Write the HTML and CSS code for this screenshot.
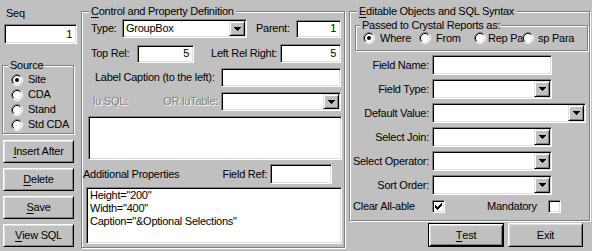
FILE: index.html
```html
<!DOCTYPE html>
<html>
<head>
<meta charset="utf-8">
<link rel="stylesheet" href="styles.css">
</head>
<body>
<svg class="defs" width="0" height="0">
  <symbol id="rb" viewBox="0 0 12 12">
    <circle cx="6" cy="6" r="4.5" fill="#fff"/>
    <path d="M2.11 9.89A5.5 5.5 0 0 1 9.89 2.11" stroke="#808080" fill="none"/>
    <path d="M9.89 2.11A5.5 5.5 0 0 1 2.11 9.89" stroke="#fff" fill="none"/>
    <path d="M2.82 9.18A4.5 4.5 0 0 1 9.18 2.82" stroke="#000" fill="none"/>
    <path d="M9.18 2.82A4.5 4.5 0 0 1 2.82 9.18" stroke="#dfdfdf" fill="none"/>
  </symbol>
  <symbol id="rb-on" viewBox="0 0 12 12">
    <use href="#rb"/>
    <circle cx="6" cy="6" r="2" fill="#000"/>
  </symbol>
  <symbol id="arrow" viewBox="0 0 7 4">
    <path d="M0 0h7v1H0zM1 1h5v1H1zM2 2h3v1H2zM3 3h1v1H3z" fill="#000"/>
  </symbol>
  <symbol id="check" viewBox="0 0 7 7">
    <path d="M0 2h1v3H0zM1 3h1v3H1zM2 4h1v3H2zM3 3h1v3H3zM4 2h1v3H4zM5 1h1v3H5zM6 0h1v3H6z" fill="#000"/>
  </symbol>
</svg>

<div class="app">
  <div class="left">
    <div class="seq-label">Seq</div>
    <div class="field num seq">1</div>
    <div class="group source">
      <div class="legend">Source</div>
      <div class="radio-row"><svg class="rb"><use href="#rb-on"/></svg><span>Site</span></div>
      <div class="radio-row"><svg class="rb"><use href="#rb"/></svg><span>CDA</span></div>
      <div class="radio-row"><svg class="rb"><use href="#rb"/></svg><span>Stand</span></div>
      <div class="radio-row"><svg class="rb"><use href="#rb"/></svg><span>Std CDA</span></div>
    </div>
    <div class="btns">
      <div class="btn"><u>I</u>nsert After</div>
      <div class="btn"><u>D</u>elete</div>
      <div class="btn"><u>S</u>ave</div>
      <div class="btn"><u>V</u>iew SQL</div>
    </div>
  </div>

  <div class="group mid">
    <div class="legend"><u>C</u>ontrol and Property Definition</div>
    <div class="row r1">
      <span class="lbl l-type">Type:</span>
      <div class="combo w-type"><span class="val">GroupBox</span><span class="drop"><svg class="arr"><use href="#arrow"/></svg></span></div>
      <span class="lbl l-parent">Parent:</span>
      <div class="field num w-parent">1</div>
    </div>
    <div class="row r2">
      <span class="lbl l-top">Top Rel:</span>
      <div class="field num w-top">5</div>
      <span class="lbl l-leftrel">Left Rel Right:</span>
      <div class="field num w-leftrel">5</div>
    </div>
    <div class="row r3">
      <span class="lbl l-caption">Label Caption (to the left):</span>
      <div class="field w-120"></div>
    </div>
    <div class="row r4">
      <span class="lbl dis l-lusql">lu SQL:</span>
      <span class="lbl dis l-lutable">OR luTable:</span>
      <div class="combo w-120"><span class="val"></span><span class="drop"><svg class="arr"><use href="#arrow"/></svg></span></div>
    </div>
    <div class="field area sql-area"></div>
    <div class="row r6">
      <span class="lbl l-addl">Additional Properties</span>
      <span class="lbl l-fieldref">Field Ref:</span>
      <div class="field w-fieldref"></div>
    </div>
    <div class="field area props-area">Height="200"<br>Width="400"<br>Caption="&amp;Optional Selections"</div>
  </div>

  <div class="right">
    <div class="group edit">
      <div class="legend"><u>E</u>ditable Objects and SQL Syntax</div>
      <div class="group passed">
        <div class="legend">Passed to Crystal Reports as:</div>
        <div class="opt o-where"><svg class="rb"><use href="#rb-on"/></svg><span>Where</span></div>
        <div class="opt o-from"><svg class="rb"><use href="#rb"/></svg><span>From</span></div>
        <div class="opt o-rep"><svg class="rb"><use href="#rb"/></svg><span>Rep Pa</span></div>
        <div class="opt o-sp"><svg class="rb"><use href="#rb"/></svg><span>sp Para</span></div>
      </div>
      <div class="frow"><span class="flbl">Field Name:</span><div class="field w-120"></div></div>
      <div class="frow"><span class="flbl">Field Type:</span><div class="combo w-120"><span class="val"></span><span class="drop"><svg class="arr"><use href="#arrow"/></svg></span></div></div>
      <div class="frow"><span class="flbl">Default Value:</span><div class="combo w-default"><span class="val"></span><span class="drop"><svg class="arr"><use href="#arrow"/></svg></span></div></div>
      <div class="frow"><span class="flbl">Select Join:</span><div class="combo w-120"><span class="val"></span><span class="drop"><svg class="arr"><use href="#arrow"/></svg></span></div></div>
      <div class="frow"><span class="flbl">Select Operator:</span><div class="combo w-120"><span class="val"></span><span class="drop"><svg class="arr"><use href="#arrow"/></svg></span></div></div>
      <div class="frow"><span class="flbl">Sort Order:</span><div class="combo w-120"><span class="val"></span><span class="drop"><svg class="arr"><use href="#arrow"/></svg></span></div></div>
      <div class="chkrow">
        <span class="c-clear">Clear All-able</span>
        <span class="chk"><svg class="tick"><use href="#check"/></svg></span>
        <span class="c-mand">Mandatory</span>
        <span class="chk"></span>
      </div>
    </div>
    <div class="btn-row">
      <div class="btn default b-test"><u>T</u>est</div>
      <div class="btn b-exit">Exit</div>
    </div>
  </div>
</div>
</body>
</html>
```

FILE: styles.css
```css
* { box-sizing: border-box; }

body {
  margin: 0;
  width: 592px;
  height: 251px;
  overflow: hidden;
  background: #c0c0c0;
  color: #000;
  font-family: "Liberation Sans", Arial, sans-serif;
  font-size: 11px;
  line-height: 13px;
  letter-spacing: -0.25px;
}

.defs { display: block; width: 0; height: 0; overflow: hidden; }

u { text-decoration-thickness: 1px; text-underline-offset: 2px; }

.app { display: flex; align-items: flex-start; }

/* ---------- common controls ---------- */
.field {
  background: #fff;
  border: 1px solid;
  border-color: #808080 #fff #fff #808080;
  box-shadow: inset 1px 1px #000, inset -1px -1px #dfdfdf;
  padding: 0 3px;
  display: flex;
  align-items: center;
  white-space: nowrap;
  overflow: hidden;
  height: 19px;
  flex: none;
}
.num { justify-content: flex-end; padding-right: 4px; }

.combo {
  background: #fff;
  border: 1px solid;
  border-color: #808080 #fff #fff #808080;
  box-shadow: inset 1px 1px #000, inset -1px -1px #dfdfdf;
  padding: 1px;
  display: flex;
  height: 19px;
  flex: none;
}
.combo .val { flex: 1; padding-left: 2px; display: flex; align-items: center; white-space: nowrap; }
.combo .drop {
  width: 16px;
  background: #c0c0c0;
  border: 1px solid;
  border-color: #dfdfdf #000 #000 #dfdfdf;
  box-shadow: inset 1px 1px #fff, inset -1px -1px #808080;
  display: flex;
  align-items: center;
  justify-content: center;
}
.arr { width: 7px; height: 4px; }

.group {
  position: relative;
  border: 1px solid #808080;
  box-shadow: inset 1px 1px #fff, 1px 1px #fff;
}
.legend {
  position: absolute;
  top: -7px;
  padding: 0 2px;
  background: #c0c0c0;
  white-space: nowrap;
}

.btn {
  display: flex;
  align-items: center;
  justify-content: center;
  border: 1px solid;
  border-color: #fff #000 #000 #fff;
  box-shadow: inset 1px 1px #dfdfdf, inset -1px -1px #808080;
  white-space: nowrap;
}
.btn.default {
  border-color: #000;
  box-shadow: inset 1px 1px #fff, inset -1px -1px #000, inset 2px 2px #dfdfdf, inset -2px -2px #808080;
}

.rb { width: 12px; height: 12px; flex: none; margin-right: 5px; }

.lbl { white-space: nowrap; flex: none; }
.dis { color: #808080; text-shadow: 1px 1px #fff; }

/* ---------- left column ---------- */
.left {
  width: 77px;
  padding-left: 2px;
  display: flex;
  flex-direction: column;
}
.seq-label { margin: 7px 0 0 4px; }
.seq { margin: 4px 0 0 2px; width: 73px; height: 20px; }

.source {
  margin-top: 21px;
  width: 72px;
  padding: 6px 0 1px 8px;
}
.source .legend { left: 5px; padding: 0 1px 0 2px; }
.radio-row { display: flex; align-items: center; height: 15px; }

.btns {
  display: flex;
  flex-direction: column;
  gap: 5px;
  margin: 6px 0 0 1px;
}
.btns .btn { width: 71px; height: 23px; }

/* ---------- middle group ---------- */
.mid {
  margin: 11px 0 0 4px;
  width: 264px;
  height: 237px;
  padding: 7px 3px 0 9px;
  flex: none;
}
.mid > .legend { left: 7px; padding: 0 3px 0 2px; }

.row { display: flex; align-items: center; }
.r1 { height: 19px; }
.r2 { height: 19px; margin-top: 6px; }
.r3 { height: 19px; margin-top: 5px; }
.r4 { height: 19px; margin-top: 5px; }
.r6 { height: 20px; margin-top: 4px; }

.l-type { width: 31px; }
.w-type { width: 125px; }
.l-parent { width: 40px; margin-left: 9px; }
.w-parent { width: 45px; height: 18px; }

.l-top { width: 46px; }
.w-top { width: 57px; height: 18px; }
.l-leftrel { flex: 1; text-align: right; padding-right: 3px; }
.w-leftrel { width: 61px; }

.l-caption { flex: 1; padding-left: 4px; }
.w-120 { width: 120px; }

.l-lusql { padding-left: 2px; }
.l-lutable { flex: 1; text-align: right; padding-right: 3px; }

.area {
  display: block;
  white-space: normal;
  padding: 1px 3px;
}
.sql-area { margin: 5px -1px 0 -3px; width: 254px; height: 44px; }

.l-addl { margin-left: -8px; }
.l-fieldref { flex: 1; text-align: right; padding-right: 3px; }
.w-fieldref { width: 62px; height: 20px; margin-right: 9px; }

.props-area { margin: 3px -1px 0 -5px; width: 256px; height: 57px; }

/* ---------- right column ---------- */
.right { margin-left: 4px; width: 241px; flex: none; }

.edit {
  margin-top: 11px;
  height: 210px;
  padding-top: 13px;
}
.edit > .legend { left: 7px; padding: 0 3px 0 2px; }

.passed {
  margin-left: 5px;
  width: 233px;
  height: 26px;
  display: flex;
  align-items: center;
  padding-left: 7px;
}
.passed .legend { left: 4px; padding: 0 1px 0 2px; }

.opt { display: flex; align-items: center; flex: none; white-space: nowrap; }
.o-where { width: 56px; }
.o-from { width: 55px; }
.o-rep { width: 48px; }
.o-rep .rb { margin-right: 2px; }
.o-sp { width: 60px; }
.o-sp .rb { margin-right: 4px; }

.frow { display: flex; align-items: center; height: 20px; margin-top: 4px; }
.flbl { width: 79px; margin-right: 3px; text-align: right; white-space: nowrap; flex: none; }
.frow .field { height: 20px; }
.frow .combo { height: 20px; }
.w-default { width: 154px; }

.chkrow { display: flex; align-items: center; height: 13px; margin-top: 5px; }
.c-clear { width: 82px; padding-left: 3px; white-space: nowrap; }
.c-mand { width: 61px; margin-left: 42px; white-space: nowrap; }
.chk {
  width: 13px;
  height: 13px;
  flex: none;
  background: #fff;
  border: 1px solid;
  border-color: #808080 #fff #fff #808080;
  box-shadow: inset 1px 1px #000, inset -1px -1px #dfdfdf;
  padding: 2px;
  display: flex;
}
.tick { width: 7px; height: 7px; }

.btn-row { display: flex; gap: 4px; margin-top: 2px; padding-left: 79px; }
.b-test { width: 76px; height: 24px; }
.b-exit { width: 75px; height: 24px; }
```
